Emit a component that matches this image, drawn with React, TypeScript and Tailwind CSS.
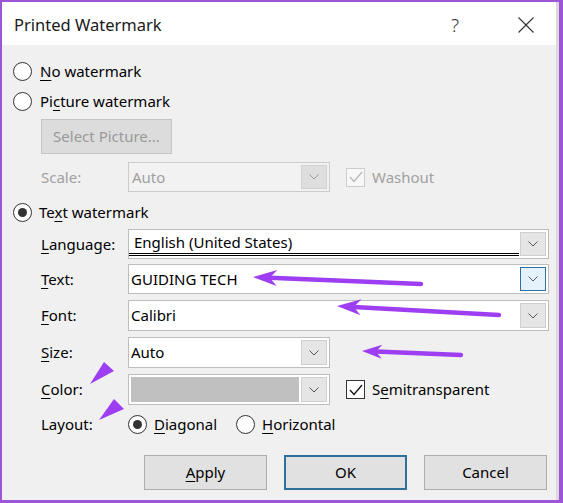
import React from 'react';

type Pt = [number, number];

// Hand-drawn style callout arrow: shaft from tail to tip, filled head at the tip
const Arrow = ({ tip, tail, head = 24, half = 8 }: { tip: Pt; tail: Pt; head?: number; half?: number }) => {
  const dx = tail[0] - tip[0];
  const dy = tail[1] - tip[1];
  const len = Math.hypot(dx, dy);
  const ux = dx / len;
  const uy = dy / len;
  const bx = tip[0] + ux * head;
  const by = tip[1] + uy * head;
  const p1: Pt = [bx - uy * half, by + ux * half];
  const p2: Pt = [bx + uy * half, by - ux * half];
  const neck: Pt = [tip[0] + ux * head * 0.7, tip[1] + uy * head * 0.7];
  return (
    <g>
      <line x1={neck[0]} y1={neck[1]} x2={tail[0]} y2={tail[1]} stroke="#9d3ef2" strokeWidth={4.5} strokeLinecap="round" />
      <polygon points={`${tip[0]},${tip[1]} ${p1[0]},${p1[1]} ${neck[0]},${neck[1]} ${p2[0]},${p2[1]}`} fill="#9d3ef2" />
    </g>
  );
};

const Key = ({ children }: { children: React.ReactNode }) => (
  <span className="underline decoration-1 underline-offset-[3px]">{children}</span>
);

const Radio = ({ checked }: { checked?: boolean }) => (
  <span className="flex h-[19px] w-[19px] shrink-0 items-center justify-center rounded-full border border-[#333333] bg-white">
    {checked && <span className="h-[9px] w-[9px] rounded-full bg-[#333333]" />}
  </span>
);

const Chevron = ({ color = '#555555' }: { color?: string }) => (
  <svg width="10" height="6" viewBox="0 0 10 6">
    <polyline points="0.5,0.5 5,5 9.5,0.5" fill="none" stroke={color} strokeWidth="1" />
  </svg>
);

const DropButton = ({ focused, disabled }: { focused?: boolean; disabled?: boolean }) => (
  <div
    className={
      focused
        ? 'flex h-full w-[26px] items-center justify-center border border-[#2f6f9c] bg-[#e5f1fb]'
        : disabled
          ? 'flex h-full w-[26px] items-center justify-center border border-[#d2d2d2] bg-[#dedede]'
          : 'flex h-full w-[26px] items-center justify-center border border-[#cfcfcf] bg-[#e5e5e5]'
    }
  >
    <Chevron color={disabled ? '#9a9a9a' : '#555555'} />
  </div>
);

const Label = ({ children, muted }: { children: React.ReactNode; muted?: boolean }) => (
  <span className={muted ? 'w-[87px] shrink-0 text-[#a0a0a0]' : 'w-[87px] shrink-0 text-black'}>{children}</span>
);

const Checkbox = ({ disabled }: { disabled?: boolean }) => (
  <span
    className={
      disabled
        ? 'flex h-[19px] w-[19px] items-center justify-center border border-[#cccccc] bg-[#f7f7f7]'
        : 'flex h-[19px] w-[19px] items-center justify-center border border-[#333333] bg-white'
    }
  >
    <svg width="14" height="12" viewBox="0 0 14 12">
      <polyline points="1,6 5,10.5 13,1" fill="none" stroke={disabled ? '#b8b8b8' : '#111111'} strokeWidth="1.3" />
    </svg>
  </span>
);

export default function App() {
  return (
    <div className="relative h-[503px] w-[563px] bg-[#9c55d6] pb-[3px] pl-[2px] pr-[4px] pt-[2px] font-['Noto_Sans',sans-serif] text-[15px] text-black">
      <div className="flex h-full flex-col border-r-[3px] border-[#dadada]">
        {/* Title bar */}
        <div className="flex h-[43px] shrink-0 items-center bg-white pl-[12px] pt-[3px]">
          <span className="text-[16.5px] text-[#1a1a1a]">Printed Watermark</span>
          <span className="ml-auto mr-[59px] text-[19px] font-light text-[#333333]">?</span>
          <svg className="mr-[22px]" width="16" height="16" viewBox="0 0 16 16">
            <path d="M0.5 0.5 L15.5 15.5 M15.5 0.5 L0.5 15.5" stroke="#333333" strokeWidth="1.1" />
          </svg>
        </div>

        {/* Body */}
        <div className="flex flex-1 flex-col bg-[#f0f0f0] pl-[11px]">
          <div className="mt-[15px] flex h-[22px] items-center gap-[8px]">
            <Radio />
            <span><Key>N</Key>o watermark</span>
          </div>
          <div className="mt-[8px] flex h-[22px] items-center gap-[8px]">
            <Radio />
            <span>Pi<Key>c</Key>ture watermark</span>
          </div>

          <div className="ml-[28px] mt-[7px] flex h-[35px] w-[131px] items-center justify-center border border-[#c4c4c4] bg-[#dcdcdc] text-[#9a9a9a]">
            Select Picture...
          </div>

          <div className="ml-[28px] mt-[8px] flex h-[30px] items-center">
            <Label muted>Scale:</Label>
            <div className="flex h-full w-[202px] items-center border border-[#cccccc] bg-[#f2f2f2] py-[2px] pl-[3px] pr-[2px] text-[#a0a0a0]">
              <span className="flex-1">Auto</span>
              <DropButton disabled />
            </div>
            <div className="ml-[16px] flex items-center gap-[7px] text-[#a0a0a0]">
              <Checkbox disabled />
              <span>Washout</span>
            </div>
          </div>

          <div className="mt-[9px] flex h-[22px] items-center gap-[7px]">
            <Radio checked />
            <span>Te<Key>x</Key>t watermark</span>
          </div>

          <div className="ml-[28px] mt-[6px] flex h-[30px] items-center">
            <Label><Key>L</Key>anguage:</Label>
            <div className="flex h-full w-[421px] items-center border border-[#bdbdbd] bg-white py-[2px] pr-[2px]">
              <div className="relative flex h-full flex-1 items-center pb-[3px] pl-[5px]">
                English (United States)
                <div className="absolute bottom-0 left-0 right-[1px] h-[3px] border-b border-t-[1.5px] border-black" />
              </div>
              <DropButton />
            </div>
          </div>

          <div className="ml-[28px] mt-[5px] flex h-[30px] items-center">
            <Label><Key>T</Key>ext:</Label>
            <div className="flex h-full w-[421px] items-center border border-[#bdbdbd] bg-white py-[2px] pl-[2px] pr-[2px]">
              <span className="flex-1">GUIDING TECH</span>
              <DropButton focused />
            </div>
          </div>

          <div className="ml-[28px] mt-[6px] flex h-[31px] items-center">
            <Label><Key>F</Key>ont:</Label>
            <div className="flex h-full w-[421px] items-center border border-[#bdbdbd] bg-white py-[2px] pl-[2px] pr-[2px]">
              <span className="flex-1">Calibri</span>
              <DropButton />
            </div>
          </div>

          <div className="ml-[28px] mt-[6px] flex h-[31px] items-center">
            <Label><Key>S</Key>ize:</Label>
            <div className="flex h-full w-[202px] items-center border border-[#bdbdbd] bg-white py-[2px] pl-[2px] pr-[2px]">
              <span className="flex-1">Auto</span>
              <DropButton />
            </div>
          </div>

          <div className="ml-[28px] mt-[6px] flex h-[31px] items-center">
            <Label><Key>C</Key>olor:</Label>
            <div className="flex h-full w-[202px] items-center gap-[2px] border border-[#bdbdbd] bg-white p-[2px]">
              <div className="h-full flex-1 bg-[#c0c0c0]" />
              <DropButton />
            </div>
            <div className="ml-[16px] flex items-center gap-[7px]">
              <Checkbox />
              <span>S<Key>e</Key>mitransparent</span>
            </div>
          </div>

          <div className="ml-[28px] mt-[8px] flex h-[22px] items-center">
            <Label>Layout:</Label>
            <Radio checked />
            <span className="ml-[7px]"><Key>D</Key>iagonal</span>
            <span className="ml-[19px]"><Radio /></span>
            <span className="ml-[7px]"><Key>H</Key>orizontal</span>
          </div>

          <div className="mt-[20px] flex h-[35px] justify-end gap-[17px] pr-[9px]">
            <div className="flex w-[123px] items-center justify-center border border-[#adadad] bg-[#e1e1e1]">
              <span><Key>A</Key>pply</span>
            </div>
            <div className="flex w-[123px] items-center justify-center border-2 border-[#2f6f9c] bg-[#e1e1e1]">
              OK
            </div>
            <div className="flex w-[123px] items-center justify-center border border-[#adadad] bg-[#e1e1e1]">
              Cancel
            </div>
          </div>
        </div>
      </div>

      {/* Callout arrows */}
      <svg className="pointer-events-none absolute left-0 top-0" width="563" height="503">
        <Arrow tip={[253, 277]} tail={[421, 284]} />
        <Arrow tip={[337, 306]} tail={[499, 315]} />
        <Arrow tip={[362, 351]} tail={[461, 355]} head={20} half={7} />
        <polygon points="90,384 104,362 114,371" fill="#9d3ef2" />
        <polygon points="99,420 114,399 124,409" fill="#9d3ef2" />
      </svg>
    </div>
  );
}
